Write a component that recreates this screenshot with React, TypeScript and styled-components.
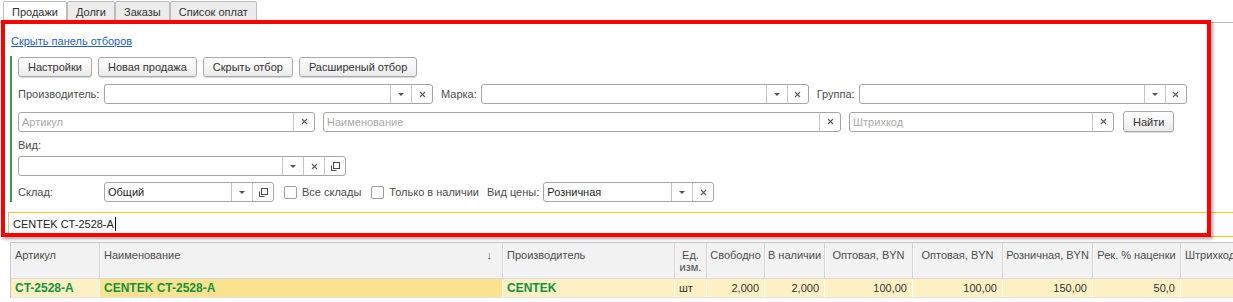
import React from "react";
import styled, { createGlobalStyle } from "styled-components";

const GlobalStyle = createGlobalStyle`
  html, body {
    margin: 0;
    padding: 0;
    background: #fff;
  }
  body {
    font-family: "Liberation Sans", Arial, sans-serif;
    font-size: 11px;
    color: #4d4d4d;
    overflow: hidden;
  }
`;

const Page = styled.div`
  position: relative;
  width: 1233px;
  height: 302px;
  overflow: hidden;
`;

const TabBar = styled.div`
  display: flex;
  padding: 1px 0 0 3px;
  border-bottom: 1px solid #bdbdbd;
`;

const Tab = styled.div<{ $active?: boolean }>`
  height: 22px;
  box-sizing: border-box;
  margin-bottom: -1px;
  padding: 0 8px;
  line-height: 20px;
  color: #333;
  border: 1px solid #bdbdbd;
  border-bottom-color: ${(p) => (p.$active ? "#fff" : "#bdbdbd")};
  border-radius: 2px 2px 0 0;
  background: ${(p) => (p.$active ? "#fff" : "#ececec")};
`;

const FilterPanel = styled.div`
  padding-top: 12px;
`;

const HideLink = styled.a`
  display: inline-block;
  margin-left: 11px;
  line-height: 13px;
  color: #1f5fc9;
  text-decoration: underline;
  cursor: pointer;
`;

const Group = styled.div`
  display: flex;
  flex-direction: column;
  margin: 8px 0 0 10px;
  padding: 1px 0 0 6px;
  border-left: 2px solid #3a9d4b;
`;

const Row = styled.div<{ $top?: number }>`
  display: flex;
  align-items: center;
  margin-top: ${(p) => p.$top ?? 0}px;
`;

const LeadLabel = styled.span`
  width: 86px;
  flex-shrink: 0;
  white-space: nowrap;
`;

const InlineLabel = styled.span<{ $left?: number }>`
  padding: 0 4px 0 ${(p) => p.$left ?? 8}px;
  white-space: nowrap;
`;

const BlockLabel = styled.div`
  margin-top: 7px;
  line-height: 13px;
`;

const Button = styled.button`
  height: 20px;
  padding: 0 9px;
  margin-right: 6px;
  border: 1px solid #a9a9a9;
  border-radius: 3px;
  background: linear-gradient(#ffffff, #ebebeb);
  box-shadow: 0 1px 1px rgba(0, 0, 0, 0.16);
  font: inherit;
  color: #333;
  white-space: nowrap;
  cursor: pointer;
`;

const FindButton = styled(Button)`
  height: 21px;
  margin: 0 0 0 9px;
`;

const InputBox = styled.div<{ $w: number; $gap?: number }>`
  display: flex;
  flex-shrink: 0;
  width: ${(p) => p.$w}px;
  height: 20px;
  box-sizing: border-box;
  margin-right: ${(p) => p.$gap ?? 0}px;
  border: 1px solid #a6a6a6;
  border-radius: 3px;
  background: #fff;
`;

const InputText = styled.div<{ $placeholder?: boolean }>`
  flex: 1;
  padding: 0 3px;
  line-height: 18px;
  color: ${(p) => (p.$placeholder ? "#a9a9a9" : "#262626")};
  white-space: nowrap;
  overflow: hidden;
`;

const InputButton = styled.div`
  width: 21px;
  box-sizing: border-box;
  border-left: 1px solid #c6c6c6;
  display: flex;
  align-items: center;
  justify-content: center;
`;

const DropArrow = styled.span`
  width: 0;
  height: 0;
  margin-top: 1px;
  border-left: 3px solid transparent;
  border-right: 3px solid transparent;
  border-top: 3px solid #555;
`;

const CheckItem = styled.label<{ $left?: number }>`
  display: flex;
  align-items: center;
  gap: 5px;
  margin-left: ${(p) => p.$left ?? 10}px;
  white-space: nowrap;
`;

const CheckBox = styled.span`
  width: 13px;
  height: 13px;
  box-sizing: border-box;
  border: 1px solid #9d9d9d;
  border-radius: 2px;
  background: #fff;
`;

const SearchBox = styled.div`
  margin: 10px -6px 0 8px;
  height: 25px;
  box-sizing: border-box;
  padding-left: 4px;
  border: 1px solid #f6c41c;
  border-left-color: #d8c48a;
  line-height: 23px;
  color: #222;
`;

const Caret = styled.span`
  display: inline-block;
  width: 1px;
  height: 14px;
  margin-left: 1px;
  vertical-align: -3px;
  background: #000;
`;

const Grid = styled.div`
  width: max-content;
  margin: 5px 0 0 10px;
  border-top: 1px solid #c4c4c4;
  border-left: 1px solid #c4c4c4;
`;

const HeadRow = styled.div<{ $cols: string }>`
  display: grid;
  grid-template-columns: ${(p) => p.$cols};
  height: 36px;
  box-sizing: border-box;
  background: #f2f2f2;
  border-bottom: 1px solid #dadada;
`;

const HeadCell = styled.div<{ $align: string }>`
  display: flex;
  justify-content: ${(p) => (p.$align === "center" ? "center" : "space-between")};
  text-align: ${(p) => p.$align};
  padding: 6px 4px 0;
  line-height: 12px;
  border-right: 1px solid #d4d4d4;
  box-shadow: inset 1px 0 #fbfbfb;
  color: #4d4d4d;
  overflow: hidden;
  white-space: nowrap;
`;

const SortArrow = styled.span`
  margin-right: 6px;
  color: #555;
`;

const DataRow = styled.div<{ $cols: string }>`
  display: grid;
  grid-template-columns: ${(p) => p.$cols};
  height: 19px;
  box-sizing: border-box;
  border-bottom: 1px solid #e3e3e3;
`;

const DataCell = styled.div<{ $align: string; $bold?: boolean; $current?: boolean }>`
  padding: 0 5px 0 4px;
  line-height: 18px;
  text-align: ${(p) => p.$align};
  font-weight: ${(p) => (p.$bold ? 700 : 400)};
  font-size: ${(p) => (p.$bold ? "12px" : "11px")};
  color: ${(p) => (p.$bold ? "#12933b" : "#333")};
  background: ${(p) => (p.$current ? "#fbe28f" : "#fdf1c4")};
  border-right: 1px solid #fff;
  white-space: nowrap;
  overflow: hidden;
`;

const Frame = styled.div`
  position: absolute;
  left: 1px;
  top: 20px;
  width: 1210px;
  height: 217px;
  box-sizing: border-box;
  border: 4px solid #ff0000;
  box-shadow: 2px 2px 3px rgba(0, 0, 0, 0.35);
  pointer-events: none;
`;

const ClearIcon = () => (
  <svg width="7" height="7" viewBox="0 0 7 7">
    <path d="M1 1 L6 6 M6 1 L1 6" stroke="#5a5a5a" strokeWidth="1.1" />
  </svg>
);

const OpenIcon = () => (
  <svg width="11" height="11" viewBox="0 0 11 11" fill="none">
    <rect x="3.5" y="1.5" width="6" height="6" stroke="#4a4a4a" />
    <path d="M1.5 4.5 V9.5 H6.5" stroke="#4a4a4a" />
  </svg>
);

type Btn = "drop" | "clear" | "open";

type InputProps = {
  w: number;
  gap?: number;
  value?: string;
  placeholder?: string;
  buttons?: Btn[];
};

const Input = ({ w, gap, value, placeholder, buttons = [] }: InputProps) => (
  <InputBox $w={w} $gap={gap}>
    <InputText $placeholder={!value}>{value || placeholder}</InputText>
    {buttons.map((b) => (
      <InputButton key={b}>
        {b === "drop" && <DropArrow />}
        {b === "clear" && <ClearIcon />}
        {b === "open" && <OpenIcon />}
      </InputButton>
    ))}
  </InputBox>
);

type Column = {
  title: React.ReactNode;
  width: number;
  align: "left" | "center";
  value: string;
  valueAlign: "left" | "right";
  bold?: boolean;
  current?: boolean;
  sort?: boolean;
};

const columns: Column[] = [
  { title: "Артикул", width: 89, align: "left", value: "CT-2528-A", valueAlign: "left", bold: true },
  { title: "Наименование", width: 403, align: "left", value: "CENTEK CT-2528-A", valueAlign: "left", bold: true, current: true, sort: true },
  { title: "Производитель", width: 172, align: "left", value: "CENTEK", valueAlign: "left", bold: true },
  { title: <>Ед.<br />изм.</>, width: 32, align: "center", value: "шт", valueAlign: "left" },
  { title: "Свободно", width: 58, align: "center", value: "2,000", valueAlign: "right" },
  { title: "В наличии", width: 60, align: "center", value: "2,000", valueAlign: "right" },
  { title: "Оптовая, BYN", width: 88, align: "center", value: "100,00", valueAlign: "right" },
  { title: "Оптовая, BYN", width: 90, align: "center", value: "100,00", valueAlign: "right" },
  { title: "Розничная, BYN", width: 90, align: "center", value: "150,00", valueAlign: "right" },
  { title: "Рек. % наценки", width: 88, align: "center", value: "50,0", valueAlign: "right" },
  { title: "Штрихкод", width: 120, align: "left", value: "", valueAlign: "left" },
];

const cols = columns.map((c) => `${c.width}px`).join(" ");

const tabs = ["Продажи", "Долги", "Заказы", "Список оплат"];

export default function App() {
  return (
    <Page>
      <GlobalStyle />
      <TabBar>
        {tabs.map((t, i) => (
          <Tab key={t} $active={i === 0}>
            {t}
          </Tab>
        ))}
      </TabBar>

      <FilterPanel>
        <HideLink>Скрыть панель отборов</HideLink>
        <Group>
          <Row>
            <Button>Настройки</Button>
            <Button>Новая продажа</Button>
            <Button>Скрыть отбор</Button>
            <Button>Расширеный отбор</Button>
          </Row>

          <Row $top={7}>
            <LeadLabel>Производитель:</LeadLabel>
            <Input w={329} buttons={["drop", "clear"]} />
            <InlineLabel>Марка:</InlineLabel>
            <Input w={328} buttons={["drop", "clear"]} />
            <InlineLabel>Группа:</InlineLabel>
            <Input w={328} buttons={["drop", "clear"]} />
          </Row>

          <Row $top={7}>
            <Input w={297} gap={8} placeholder="Артикул" buttons={["clear"]} />
            <Input w={518} gap={8} placeholder="Наименование" buttons={["clear"]} />
            <Input w={265} placeholder="Штрихкод" buttons={["clear"]} />
            <FindButton>Найти</FindButton>
          </Row>

          <BlockLabel>Вид:</BlockLabel>
          <Row $top={4}>
            <Input w={328} buttons={["drop", "clear", "open"]} />
          </Row>

          <Row $top={6}>
            <LeadLabel>Склад:</LeadLabel>
            <Input w={170} value="Общий" buttons={["drop", "open"]} />
            <CheckItem>
              <CheckBox />
              Все склады
            </CheckItem>
            <CheckItem>
              <CheckBox />
              Только в наличии
            </CheckItem>
            <InlineLabel>Вид цены:</InlineLabel>
            <Input w={171} value="Розничная" buttons={["drop", "clear"]} />
          </Row>
        </Group>

        <SearchBox>
          CENTEK CT-2528-A
          <Caret />
        </SearchBox>
      </FilterPanel>

      <Grid>
        <HeadRow $cols={cols}>
          {columns.map((c, i) => (
            <HeadCell key={i} $align={c.align}>
              <span>{c.title}</span>
              {c.sort && <SortArrow>↓</SortArrow>}
            </HeadCell>
          ))}
        </HeadRow>
        <DataRow $cols={cols}>
          {columns.map((c, i) => (
            <DataCell key={i} $align={c.valueAlign} $bold={c.bold} $current={c.current}>
              {c.value}
            </DataCell>
          ))}
        </DataRow>
      </Grid>

      <Frame />
    </Page>
  );
}
